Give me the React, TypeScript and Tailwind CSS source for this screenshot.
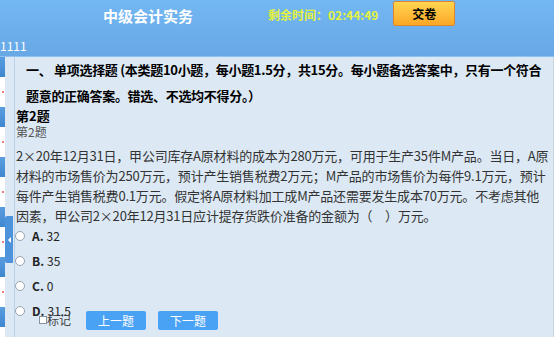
import { useState } from 'react'

const options = [
  { key: 'A', text: '32' },
  { key: 'B', text: '35' },
  { key: 'C', text: '0' },
  { key: 'D', text: '31.5' },
]

const stemLines = [
  '2×20年12月31日，甲公司库存A原材料的成本为280万元，可用于生产35件M产品。当日，A原',
  '材料的市场售价为250万元，预计产生销售税费2万元；M产品的市场售价为每件9.1万元，预计',
  '每件产生销售税费0.1万元。假定将A原材料加工成M产品还需要发生成本70万元。不考虑其他',
  '因素，甲公司2×20年12月31日应计提存货跌价准备的金额为（　）万元。',
]

export default function App() {
  const [picked, setPicked] = useState<string | null>(null)
  const [marked, setMarked] = useState(false)

  return (
    <div
      className="w-[554px] h-[337px] overflow-hidden flex flex-col bg-[#dce9f5]"
      style={{ fontFamily: '"Noto Sans CJK SC", "Noto Sans", sans-serif' }}
    >
      {/* 顶部 */}
      <div className="h-[57px] shrink-0 bg-gradient-to-b from-[#73b7f3] to-[#67a8e5] border-b border-[#8ec2ef] flex flex-col">
        <div className="h-[30px] flex items-center">
          <div className="w-[103px]" />
          <div className="text-white font-bold text-[15px] leading-none">中级会计实务</div>
          <div className="w-[75px]" />
          <div className="text-[#e4f23c] font-bold text-[12px] leading-none">剩余时间：02:44:49</div>
          <button className="ml-[15px] mt-[-3px] w-[62px] h-[25px] rounded-[2px] border border-[#d9872a] bg-gradient-to-b from-[#ffd651] to-[#fca624] text-[12px] font-bold text-black leading-none">
            交卷
          </button>
        </div>
        <div className="text-white text-[12px] leading-none mt-[10px]">1111</div>
      </div>

      <div className="flex-1 flex min-h-0">
        {/* 左侧题号栏 */}
        <div className="w-[15px] shrink-0 flex border-r border-[#b9d1ea]">
          <div className="w-[5px] flex flex-col">
            {[0, 1, 2, 3, 4, 5].map(i => (
              <div key={i} className="h-[50px] shrink-0 flex flex-col">
                <div className="h-[20px] bg-gradient-to-b from-[#5a9ee0] to-[#3f86d0]" />
                <div className="h-[30px] bg-white flex items-center">
                  <div className="w-[2px] h-[2px] bg-[#f07a7a] ml-[2px]" />
                </div>
              </div>
            ))}
          </div>
          <div className="flex-1 flex flex-col pt-[159px]">
            <div className="w-[8px] h-[47px] bg-[#4d93db] rounded-l-[2px] flex items-center justify-center">
              <div className="w-0 h-0 border-y-[3px] border-y-transparent border-r-[3px] border-r-white" />
            </div>
          </div>
        </div>

        {/* 题目内容 */}
        <div className="flex-1 flex flex-col pl-[1px] text-[#333] border-r border-[#c8d4df]">
          <div className="pl-[10px] text-[13px] font-bold text-black leading-[26px] whitespace-nowrap tracking-[-0.3px]">
            一、 单项选择题 (本类题10小题，每小题1.5分，共15分。每小题备选答案中，只有一个符合
            <br />
            题意的正确答案。错选、不选均不得分。）
          </div>
          <div className="text-[13px] font-bold text-black leading-[14px]">第2题</div>
          <div className="mt-[1px] text-[12px] text-[#555] leading-[16px]">第2题</div>
          <div className="mt-[6px] text-[13px] leading-[20px] whitespace-nowrap tracking-[-0.2px]">
            {stemLines.map((l, i) => (
              <div key={i}>{l}</div>
            ))}
          </div>
          <div className="mt-[-3px] flex flex-col">
            {options.map(o => (
              <label key={o.key} className="h-[25px] flex items-center text-[12px] text-[#222] cursor-pointer">
                <input
                  type="radio"
                  name="q2"
                  checked={picked === o.key}
                  onChange={() => setPicked(o.key)}
                  className="w-[10px] h-[10px] m-0 ml-[-1px] mr-[7px] appearance-none rounded-full border border-[#9aa3ad] bg-white checked:bg-[#3d8ee0]"
                />
                <span className="font-bold">{o.key}.</span>
                <span className="ml-[3px]">{o.text}</span>
              </label>
            ))}
          </div>
          <div className="mt-[-12px] h-[19px] flex items-center">
            <label className="ml-[23px] mt-[-1px] flex items-center text-[12px] text-[#444] cursor-pointer">
              <input
                type="checkbox"
                checked={marked}
                onChange={() => setMarked(!marked)}
                className="w-[8px] h-[8px] m-0 appearance-none border border-[#8a939c] bg-white checked:bg-[#3d8ee0]"
              />
              <span className="leading-none">标记</span>
            </label>
            <button className="ml-[15px] w-[60px] h-[19px] rounded-[2px] bg-[#4aa2f4] text-white text-[12px] leading-none">
              上一题
            </button>
            <button className="ml-[12px] w-[60px] h-[19px] rounded-[2px] bg-[#4aa2f4] text-white text-[12px] leading-none">
              下一题
            </button>
          </div>
        </div>
      </div>
    </div>
  )
}
